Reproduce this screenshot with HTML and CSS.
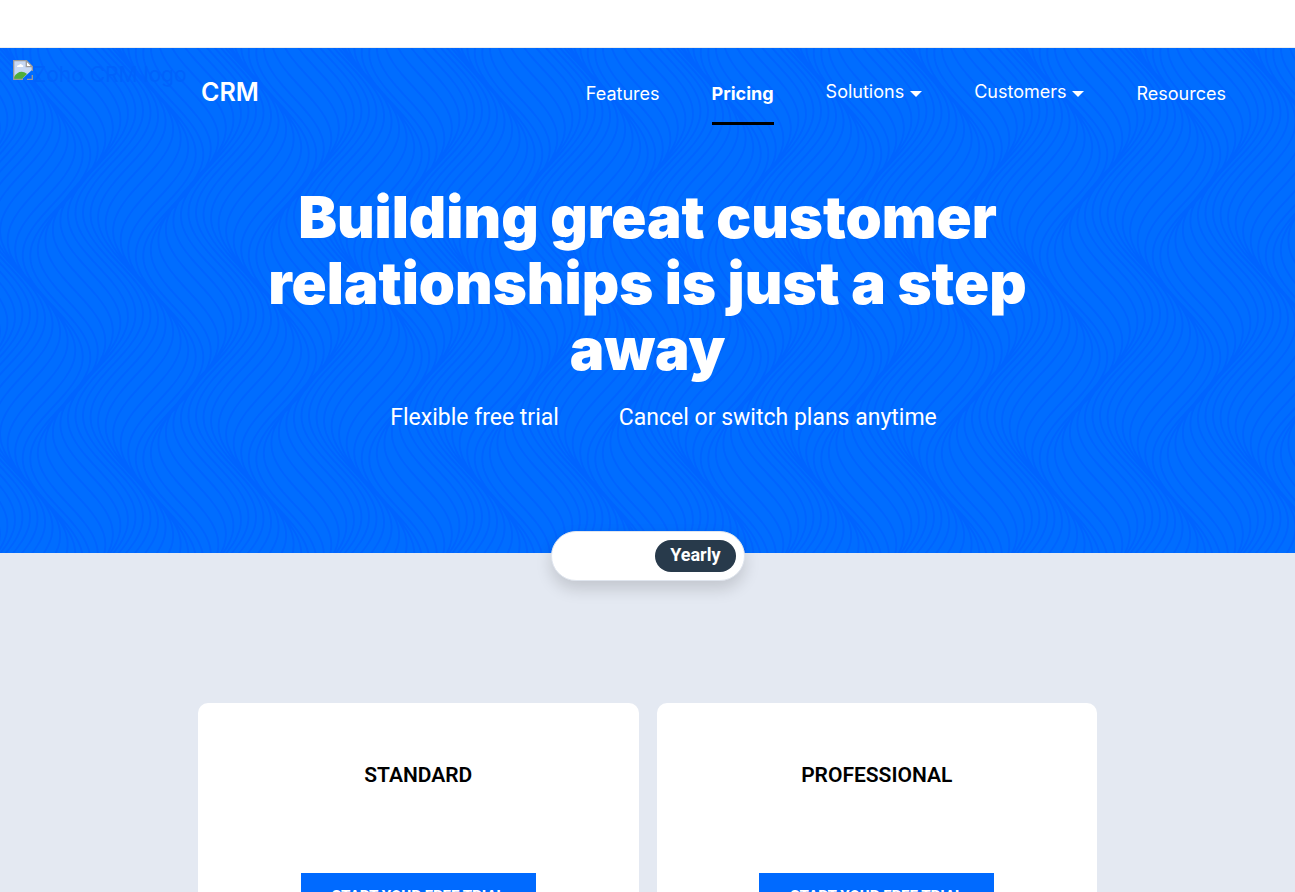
FILE: index.html
```html
<!DOCTYPE html>
<html lang="en">
<head>
<meta charset="utf-8">
<title>Zoho CRM Pricing</title>
<link rel="stylesheet" href="styles.css">
</head>
<body>
<div class="topbar"></div>
<section class="hero">
  <svg class="waves" aria-hidden="true">
    <defs>
      <pattern id="wave" width="113" height="203" patternUnits="userSpaceOnUse">
        <path id="wave-lines" class="wave-lines"/>
      </pattern>
    </defs>
    <rect width="100%" height="100%" fill="url(#wave)"/>
  </svg>
  <header class="header">
    <a class="logo" href="#">
      <svg class="broken" viewBox="0 0 20 20" width="20" height="20" aria-hidden="true">
        <path d="M1 1H14L19 6V10L9 19H1Z" fill="#c6d8f4"/>
        <path d="M1 17C4 12 9 10 14 14L9 19H1Z" fill="#4fae3a"/>
        <path d="M4 6.500Q4 5 6 5Q8 3 9 5Q11 5 10 7H4Z" fill="#fff"/>
        <path d="M13 1V7H19Z" fill="#fff"/>
        <path d="M10 19.300H.700V.700H13.500L19.300 6.500V11M13.300 1V6.700H19M14 19.300H19.300V15" fill="none" stroke="#9b9b9b" stroke-width="1.300"/>
      </svg>
      <span class="logo-alt">Zoho CRM logo</span>
    </a>
    <a class="brand" href="#">CRM</a>
    <nav class="nav">
      <a class="nav-item" href="#">Features</a>
      <a class="nav-item active" href="#">Pricing</a>
      <button class="nav-item menu" type="button">Solutions<span class="caret"></span></button>
      <button class="nav-item menu" type="button">Customers<span class="caret"></span></button>
      <a class="nav-item" href="#">Resources</a>
    </nav>
  </header>
  <h1 class="title">Building great customer relationships is just a step away</h1>
  <ul class="perks">
    <li>Flexible free trial</li>
    <li>Cancel or switch plans anytime</li>
  </ul>
  <div class="toggle">
    <button class="toggle-option" type="button" aria-pressed="true">Yearly</button>
  </div>
</section>
<main class="plans">
  <article class="plan">
    <h2 class="plan-name">STANDARD</h2>
    <a class="cta" href="#">START YOUR FREE TRIAL</a>
  </article>
  <article class="plan">
    <h2 class="plan-name">PROFESSIONAL</h2>
    <a class="cta" href="#">START YOUR FREE TRIAL</a>
  </article>
</main>
<script src="waves.js"></script>
</body>
</html>
```
FILE: styles.css
```css
* { box-sizing: border-box; }
html { height: 100%; overflow: hidden; }
body { margin: 0; height: 100%; overflow: hidden; background: #e4e9f2; font-family: Roboto, sans-serif; color: #000; }
a { color: inherit; text-decoration: none; }
button { border: 0; padding: 0; background: none; color: inherit; font: inherit; }
.topbar { height: 48px; background: #fff; border-bottom: 1px solid #eee; }
.hero { position: relative; padding-bottom: 120px; background: #006dff; color: #fff; }
.waves { position: absolute; inset: 0; width: 100%; height: 100%; }
.wave-lines { fill: none; stroke: #0064ff; stroke-width: 2; }
.header { position: relative; display: flex; align-items: flex-start; padding: 12px 69px 0 13px; height: 136px; font-family: Inter, sans-serif; }
.logo { display: flex; width: 188px; color: #0062fb; font-size: 21px; line-height: 30px; }
.logo-alt { white-space: nowrap; }
.broken { flex: none; }
.brand { font-size: 25px; font-weight: 600; line-height: 30px; margin-top: 17px; }
.nav { display: flex; gap: 52px; margin: 19px 0 0 auto; align-items: flex-start; }
.nav-item { font-size: 18px; line-height: 30px; }
.nav-item.active { font-weight: 700; padding-bottom: 13px; border-bottom: 3px solid #000; }
.nav-item.menu { display: flex; align-items: center; gap: 6px; line-height: 26px; }
.caret { border: 6px solid transparent; border-top-color: #fff; border-bottom: 0; margin-top: 4px; }
.title { position: relative; max-width: 800px; margin: 0 auto; text-align: center; font: 900 58px/66px Inter, sans-serif; }
.perks { position: relative; display: flex; justify-content: center; gap: 60px; margin: 21px 0 0; padding: 0 0 0 32px; list-style: none; font-size: 23px; line-height: 30px; }
.toggle { position: absolute; left: 50%; bottom: -28px; transform: translateX(-50%); display: flex; justify-content: flex-end; align-items: center; width: 194px; height: 50px; padding: 8px; border: 1px solid #dfe5ee; border-radius: 25px; background: #fff; box-shadow: 0 8px 16px rgba(0, 0, 0, .15); }
.toggle-option { height: 32px; padding: 0 15px 2px; border-radius: 16px; background: #283a4b; color: #fff; font: 700 18px/30px Roboto, sans-serif; }
.plans { display: grid; grid-template-columns: 1fr 1fr; gap: 18px; max-width: 899px; margin: 150px auto 0; }
.plan { display: flex; flex-direction: column; align-items: center; min-height: 420px; padding-top: 57px; border-radius: 10px; background: #fff; }
.plan-name { margin: 0 0 83px; font-size: 21px; font-weight: 600; line-height: 30px; }
.cta { padding: 10px 31px; background: #006aff; color: #fff; font-size: 15px; font-weight: 800; line-height: 26px; }
```
FILE: waves.js
```js
const W = 113, H = 203, COUNT = 15, AMP = 30;
let d = "";
for (let k = -COUNT; k < COUNT * 2; k++) {
  const u = (k / COUNT) * W;
  const v = (u - 33) / W * 2 * Math.PI;
  const phase = -0.68 * Math.sin(v + 0.3 * (1 - Math.cos(v)));
  for (let y = -4; y <= H + 4; y += 3) {
    const x = u + AMP * Math.sin((y - 34) / H * 2 * Math.PI + phase);
    d += (y === -4 ? "M" : "L") + x.toFixed(1) + " " + y;
  }
}
document.getElementById("wave-lines").setAttribute("d", d);
```
